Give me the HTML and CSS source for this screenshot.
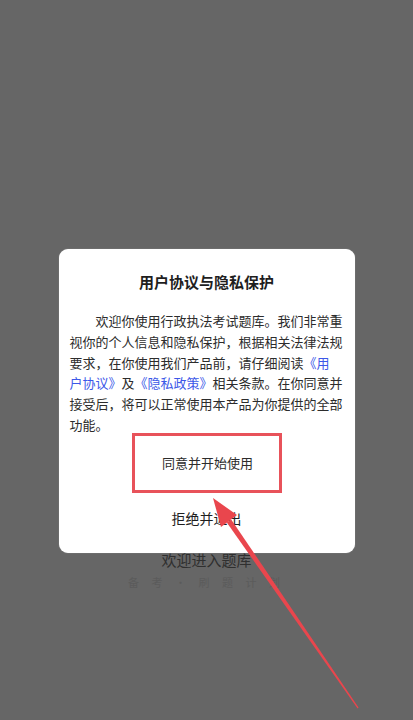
FILE: index.html
```html
<!DOCTYPE html>
<html lang="zh-CN">
<head>
<meta charset="utf-8">
<meta name="viewport" content="width=device-width, initial-scale=1">
<title>用户协议与隐私保护</title>
<link rel="stylesheet" href="styles.css">
</head>
<body>
<div class="screen">
  <main class="splash">
    <p class="splash-title">欢迎进入题库</p>
    <p class="splash-sub">备 考 · 刷 题 计 划</p>
  </main>

  <div class="mask">
    <section class="dialog" role="dialog" aria-labelledby="dlg-title">
      <h1 class="dialog-title" id="dlg-title">用户协议与隐私保护</h1>
      <p class="dialog-text">欢迎你使用行政执法考试题库。我们非常重<br>视你的个人信息和隐私保护，根据相关法律法规<br>要求，在你使用我们产品前，请仔细阅读<a class="link" href="#">《用</a><br><a class="link" href="#">户协议》</a>及<a class="link" href="#">《隐私政策》</a>相关条款。在你同意并<br>接受后，将可以正常使用本产品为你提供的全部<br>功能。</p>
      <button class="btn-agree" type="button">同意并开始使用</button>
      <button class="btn-reject" type="button">拒绝并退出</button>
    </section>
  </div>

  <svg class="arrow" width="413" height="720" viewBox="0 0 413 720" aria-hidden="true">
    <polygon points="213,498 221,527 237,515" fill="#e9464d"/>
    <polygon points="226.8,522.6 231.2,519.4 358.5,707.6 357.6,708.4" fill="#e9464d"/>
  </svg>
</div>
</body>
</html>
```

FILE: styles.css
```css
* {
  box-sizing: border-box;
}

html, body {
  margin: 0;
  padding: 0;
}

body {
  font-family: "Noto Sans CJK SC", "Noto Sans", sans-serif;
  background: #666666;
}

.screen {
  position: relative;
  width: 413px;
  height: 720px;
  overflow: hidden;
  background: #666666;
}

.splash {
  display: flex;
  flex-direction: column;
  align-items: center;
  padding-top: 549px;
}

.splash-title {
  margin: 0;
  font-size: 15px;
  line-height: 22px;
  color: #2f2f2f;
}

.splash-sub {
  margin: 0;
  font-size: 11px;
  line-height: 22px;
  letter-spacing: 5px;
  color: #5b5b5b;
}

.mask {
  position: absolute;
  inset: 0;
  display: flex;
  flex-direction: column;
  align-items: center;
  padding-top: 249px;
}

.dialog {
  width: 296px;
  background: #ffffff;
  border-radius: 9px;
  box-shadow: 0 0 1px rgba(255, 255, 255, 0.5);
  padding: 22px 10px 25px;
  display: flex;
  flex-direction: column;
  align-items: center;
}

.dialog-title {
  margin: 0;
  font-size: 15px;
  line-height: 22px;
  font-weight: 700;
  color: #1e1e1e;
}

.dialog-text {
  margin: 18px 0 0;
  width: 276px;
  padding-left: 1px;
  font-size: 13px;
  line-height: 20.8px;
  text-indent: 2em;
  white-space: nowrap;
  color: #2c2c2c;
  text-align: left;
}

.link {
  color: #3c58e8;
  text-decoration: none;
}

.btn-agree {
  margin-top: -3px;
  width: 150px;
  height: 60px;
  border: 3px solid #e8525a;
  background: #ffffff;
  font-family: inherit;
  font-size: 13px;
  color: #2c2c2c;
  padding: 0 0 0 2px;
}

.btn-reject {
  margin-top: 15px;
  border: 0;
  background: transparent;
  font-family: inherit;
  font-size: 14px;
  line-height: 20px;
  color: #1e1e1e;
  padding: 0;
}

.arrow {
  position: absolute;
  left: 0;
  top: 0;
  pointer-events: none;
}
```
